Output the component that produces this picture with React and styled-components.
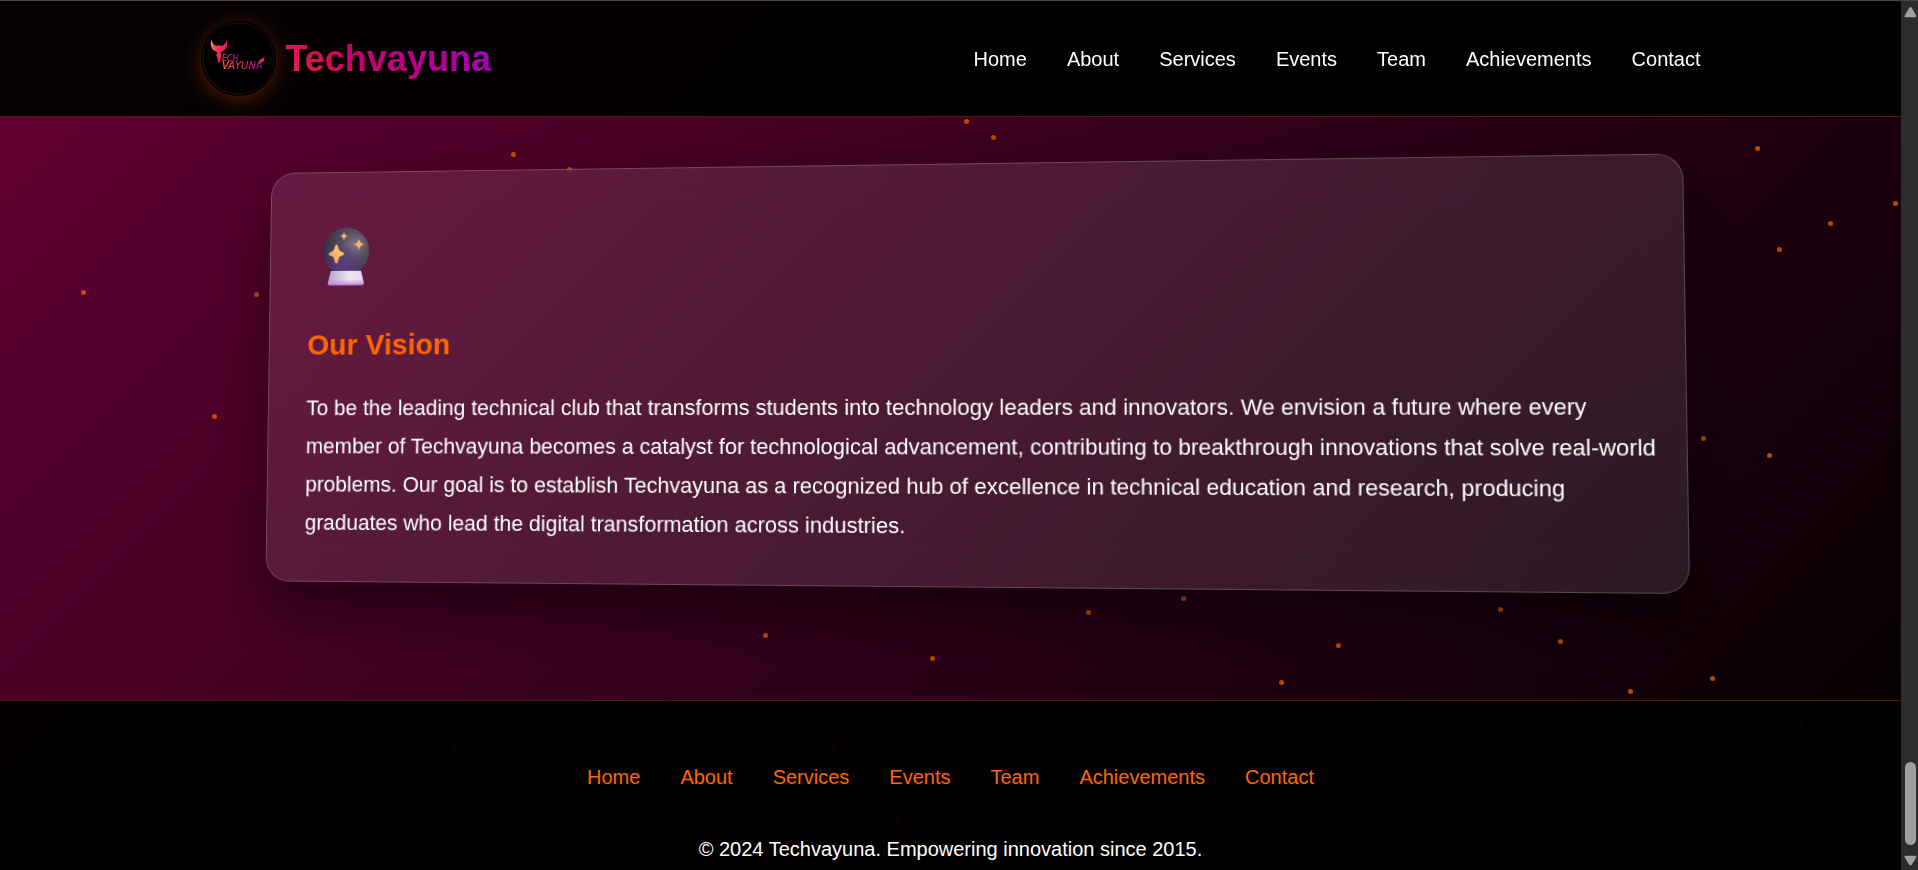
import React from "react";
import styled, { createGlobalStyle } from "styled-components";

const GlobalStyle = createGlobalStyle`
  *, *::before, *::after { box-sizing: border-box; }
  body {
    margin: 0;
    background: #000;
    color: #fff;
    font-family: Arial, "Liberation Sans", sans-serif;
    font-size: 20px;
    line-height: 32px;
  }
  h1, h2, p, ul { margin: 0; padding: 0; }
`;

const Shell = styled.div`
  display: grid;
  grid-template-columns: minmax(0, 1fr) 17px;
  height: 100vh;
  border-top: 1px solid #474747;
`;

const Viewport = styled.div`
  position: relative;
  min-height: 0;
  overflow: hidden;
  background: linear-gradient(135deg, #660033 0%, #33001a 50%, #000 100%);
`;

const ScrollArea = styled.div`
  position: relative;
  height: 100%;
  overflow-y: auto;
  scrollbar-width: none;
`;

const ParticleField = styled.div`
  position: absolute;
  inset: 0;
  pointer-events: none;
`;

const Particle = styled.i.attrs(({ $x, $y }) => ({
  style: { left: `${($x / 1901) * 100}%`, top: `${$y}px` },
}))`
  position: absolute;
  width: 5px;
  height: 5px;
  margin: -3px 0 0 -2px;
  border-radius: 50%;
  background: #ff6600;
  opacity: 0.7;
`;

const Header = styled.header`
  position: sticky;
  top: 0;
  z-index: 2;
  padding: 20px 0;
  background: rgba(0, 0, 0, 0.95);
  border-bottom: 1px solid rgba(255, 102, 0, 0.3);
`;

const HeaderInner = styled.div`
  display: flex;
  align-items: center;
  justify-content: space-between;
  max-width: 1500px;
  margin: 0 auto;
`;

const Brand = styled.a`
  display: flex;
  align-items: center;
  gap: 10px;
  text-decoration: none;
  color: transparent;
  background: linear-gradient(45deg, #ff6600, #cc0066, #9900cc);
  background-clip: text;
  -webkit-background-clip: text;
`;

const LogoBadge = styled.span`
  display: block;
  width: 75px;
  height: 75px;
  border-radius: 50%;
  background: #000;
  box-shadow: 0 4px 20px rgba(255, 102, 0, 0.3);

  svg { display: block; }
`;

const BrandName = styled.span`
  font-size: 36px;
  font-weight: 700;
  line-height: 56px;
`;

const NavList = styled.ul`
  display: flex;
  justify-content: center;
  gap: 40px;
  list-style: none;
`;

const NavLink = styled.a`
  display: block;
  color: ${({ $accent }) => ($accent ? "#ff6600" : "#fff")};
  text-decoration: none;
`;

const Main = styled.main`
  padding: 48px 24px 65px;
`;

const Stage = styled.div`
  max-width: 1404px;
  margin: 0 auto;
  padding-bottom: 50px;
  perspective: 1000px;
`;

const Card = styled.article`
  padding: 40px 20px 40px 40px;
  border: 1px solid rgba(255, 255, 255, 0.2);
  border-radius: 25px;
  background: rgba(255, 255, 255, 0.1);
  backdrop-filter: blur(20px);
  box-shadow: 0 25px 60px rgba(0, 0, 0, 0.5);
  transform: rotateX(1.25deg) rotateY(-3.08deg) translateZ(10px);
`;

const CardIcon = styled.div`
  display: flex;
  align-items: center;
  justify-content: center;
  width: 80px;
  height: 92px;
  margin-bottom: 22px;
`;

const CardTitle = styled.h2`
  margin-bottom: 22px;
  color: #ff6600;
  font-size: 30px;
  line-height: 46px;
`;

const CardText = styled.p`
  font-size: 22px;
  line-height: 39px;
`;

const Footer = styled.footer`
  padding: 60px 24px;
  text-align: center;
  background: rgba(0, 0, 0, 0.95);
  border-top: 1px solid rgba(255, 102, 0, 0.3);

  nav { margin-bottom: 40px; }
`;

const Scrollbar = styled.div`
  display: flex;
  flex-direction: column;
  align-items: center;
  justify-content: space-between;
  padding: 6px 0 4px 1px;
  background: #2c2c2c;

  svg { display: block; fill: #9f9f9f; }
`;

const Thumb = styled.div`
  width: 11px;
  height: 83px;
  margin: auto 0 10px;
  border-radius: 6px;
  background: #9f9f9f;
`;

const links = ["Home", "About", "Services", "Events", "Team", "Achievements", "Contact"];

const particles = [
  [513, 154], [569, 169], [83, 292], [256, 294], [214, 416], [966, 121],
  [993, 137], [1757, 148], [1895, 203], [1830, 223], [1779, 249], [1703, 438],
  [1769, 455], [765, 635], [932, 658], [1088, 612], [1183, 598], [1281, 682],
  [1338, 645], [1500, 609], [1560, 641], [1630, 691], [1712, 678], [454, 745],
  [834, 749], [897, 817], [1800, 725],
];

function Logo() {
  return (
    <svg width="75" height="75" viewBox="0 0 75 75" aria-hidden="true">
      <defs>
        <linearGradient id="bird" x1="0" y1="0" x2="1" y2="0.4">
          <stop offset="0" stopColor="#ff8a50" />
          <stop offset="0.5" stopColor="#ff2a5c" />
          <stop offset="1" stopColor="#d8185a" />
        </linearGradient>
        <linearGradient id="ech" x1="0" x2="1">
          <stop offset="0" stopColor="#f0285e" />
          <stop offset="1" stopColor="#8a1a6a" />
        </linearGradient>
        <linearGradient id="vayuna" x1="0" x2="1">
          <stop offset="0" stopColor="#ff7a3c" />
          <stop offset="0.35" stopColor="#f0285e" />
          <stop offset="0.7" stopColor="#c01870" />
          <stop offset="1" stopColor="#5a1a70" />
        </linearGradient>
        <linearGradient id="ring" x1="0" y1="1" x2="1" y2="0">
          <stop offset="0" stopColor="#5a2208" />
          <stop offset="0.5" stopColor="#38061f" />
          <stop offset="1" stopColor="#3c0a50" />
        </linearGradient>
      </defs>
      <circle cx="37.5" cy="37.5" r="35.5" fill="#000" stroke="url(#ring)" strokeWidth="0.6" />
      <path
        fill="url(#bird)"
        d="M10.500 18.500q.8 4.500 4.200 6.300l2 .2 1.300-1.300 1.300 1.300 2-.2q3.600-1.800 4.200-6.300 1.300 4 .3 7l-1.100 2.200-1.700 1.800-2.400 1.200-.9.6.8 3.200-.9 3-.9 4h-1.400l-.9-4-1-3 .8-3.200-.9-.6-2.600-1.200-1.600-1.800-1-2.200q-1-3 .2-7z"
      />
      <path fill="url(#bird)" d="M63.500 35.500c.2 3.500-1 5.500-3 6.500l-3 1.500c-.8-2 .1-3.700 1.900-4.900 1.400-.9 3-1.600 4.100-3.100z" />
      <text x="21" y="40" fill="url(#ech)" stroke="url(#ech)" strokeWidth="0.2" fontFamily="DejaVu Sans" fontStyle="italic" fontSize="8">ECH</text>
      <text x="21" y="48" fill="url(#vayuna)" stroke="url(#vayuna)" strokeWidth="0.2" fontFamily="DejaVu Sans" fontStyle="italic" fontSize="10">VAYUNA</text>
    </svg>
  );
}

function CrystalBall() {
  return (
    <svg width="50" height="60" viewBox="0 0 48 58" role="img" aria-label="Crystal ball">
      <defs>
        <radialGradient id="glass" cx="0.7" cy="0.36" r="0.7">
          <stop offset="0" stopColor="#7d7784" />
          <stop offset="0.45" stopColor="#544c5f" />
          <stop offset="1" stopColor="#37303f" />
        </radialGradient>
        <radialGradient id="violet" cx="0.42" cy="0.92" r="0.6">
          <stop offset="0" stopColor="#5b3a86" />
          <stop offset="1" stopColor="#5b3a86" stopOpacity="0" />
        </radialGradient>
        <linearGradient id="base" x1="0" x2="1">
          <stop offset="0" stopColor="#b3a3c4" />
          <stop offset="0.6" stopColor="#efe6f6" />
          <stop offset="1" stopColor="#e2d8ea" />
        </linearGradient>
        <linearGradient id="baseGlow" x1="0" x2="0" y1="0" y2="1">
          <stop offset="0.6" stopColor="#c48be8" stopOpacity="0" />
          <stop offset="1" stopColor="#c48be8" />
        </linearGradient>
        <linearGradient id="star" x1="1" y1="0" x2="0" y2="1">
          <stop offset="0" stopColor="#ffdc5c" />
          <stop offset="1" stopColor="#ff9370" />
        </linearGradient>
      </defs>
      <circle cx="24" cy="24" r="23.500" fill="url(#glass)" />
      <circle cx="24" cy="24" r="23.500" fill="url(#violet)" />
      <path d="M8.500 43.500h31l3 12q.3 2-2 2h-33q-2.300 0-2-2z" fill="url(#base)" />
      <path d="M8.500 43.500h31l3 12q.3 2-2 2h-33q-2.300 0-2-2z" fill="url(#baseGlow)" />
      <g fill="url(#star)">
        <path d="M14 17.500q1 0 1.400 1.300l1.600 4.500 4 2q.9.500.9 1.200t-.9 1.200l-4 2-1.600 5q-.4 1.300-1.400 1.300t-1.400-1.300l-1.600-5-4-2q-.9-.5-.9-1.200t.9-1.200l4-2 1.600-4.500q.4-1.300 1.400-1.300z" />
        <path d="M37 12l1.700 3.600 3.500 1.600-3.500 1.600-1.700 4.200-1.700-4.200-3.500-1.600 3.500-1.600z" />
        <path d="M21.500 5l1.200 2.800 2.500 1.200-2.500 1.200-1.200 3.200-1.200-3.200-2.500-1.200 2.500-1.200z" />
      </g>
    </svg>
  );
}

function Navigation({ label, accent }) {
  return (
    <nav aria-label={label}>
      <NavList>
        {links.map((name) => (
          <li key={name}>
            <NavLink href={`#${name.toLowerCase()}`} $accent={accent}>{name}</NavLink>
          </li>
        ))}
      </NavList>
    </nav>
  );
}

export default function App() {
  return (
    <>
      <GlobalStyle />
      <Shell>
        <Viewport>
          <ParticleField aria-hidden="true">
            {particles.map(([x, y]) => (
              <Particle key={`${x}-${y}`} $x={x} $y={y} />
            ))}
          </ParticleField>
          <ScrollArea>
            <Header>
              <HeaderInner>
                <Brand href="#home">
                  <LogoBadge><Logo /></LogoBadge>
                  <BrandName>Techvayuna</BrandName>
                </Brand>
                <Navigation label="Main" />
              </HeaderInner>
            </Header>
            <Main>
              <Stage>
                <Card>
                  <CardIcon><CrystalBall /></CardIcon>
                  <CardTitle>Our Vision</CardTitle>
                  <CardText>
                    To be the leading technical club that transforms students into technology
                    leaders and innovators. We envision a future where every member of Techvayuna
                    becomes a catalyst for technological advancement, contributing to breakthrough
                    innovations that solve real-world problems. Our goal is to establish Techvayuna
                    as a recognized hub of excellence in technical education and research, producing
                    graduates who lead the digital transformation across industries.
                  </CardText>
                </Card>
              </Stage>
            </Main>
            <Footer>
              <Navigation label="Footer" accent />
              <p>© 2024 Techvayuna. Empowering innovation since 2015.</p>
            </Footer>
          </ScrollArea>
        </Viewport>
        <Scrollbar aria-hidden="true">
          <svg width="13" height="11" viewBox="0 0 13 11"><path d="M6.500 0q.8 0 1.400 1l4.300 7.500q.9 1.700-1 1.700h-9.400q-1.900 0-1-1.700l4.300-7.500q.6-1 1.400-1z" /></svg>
          <Thumb />
          <svg width="13" height="11" viewBox="0 0 13 11"><path d="M6.500 10.500q-.8 0-1.400-1l-4.300-7q-.9-1.700 1-1.700h9.400q1.900 0 1 1.700l-4.300 7q-.6 1-1.400 1z" /></svg>
        </Scrollbar>
      </Shell>
    </>
  );
}
